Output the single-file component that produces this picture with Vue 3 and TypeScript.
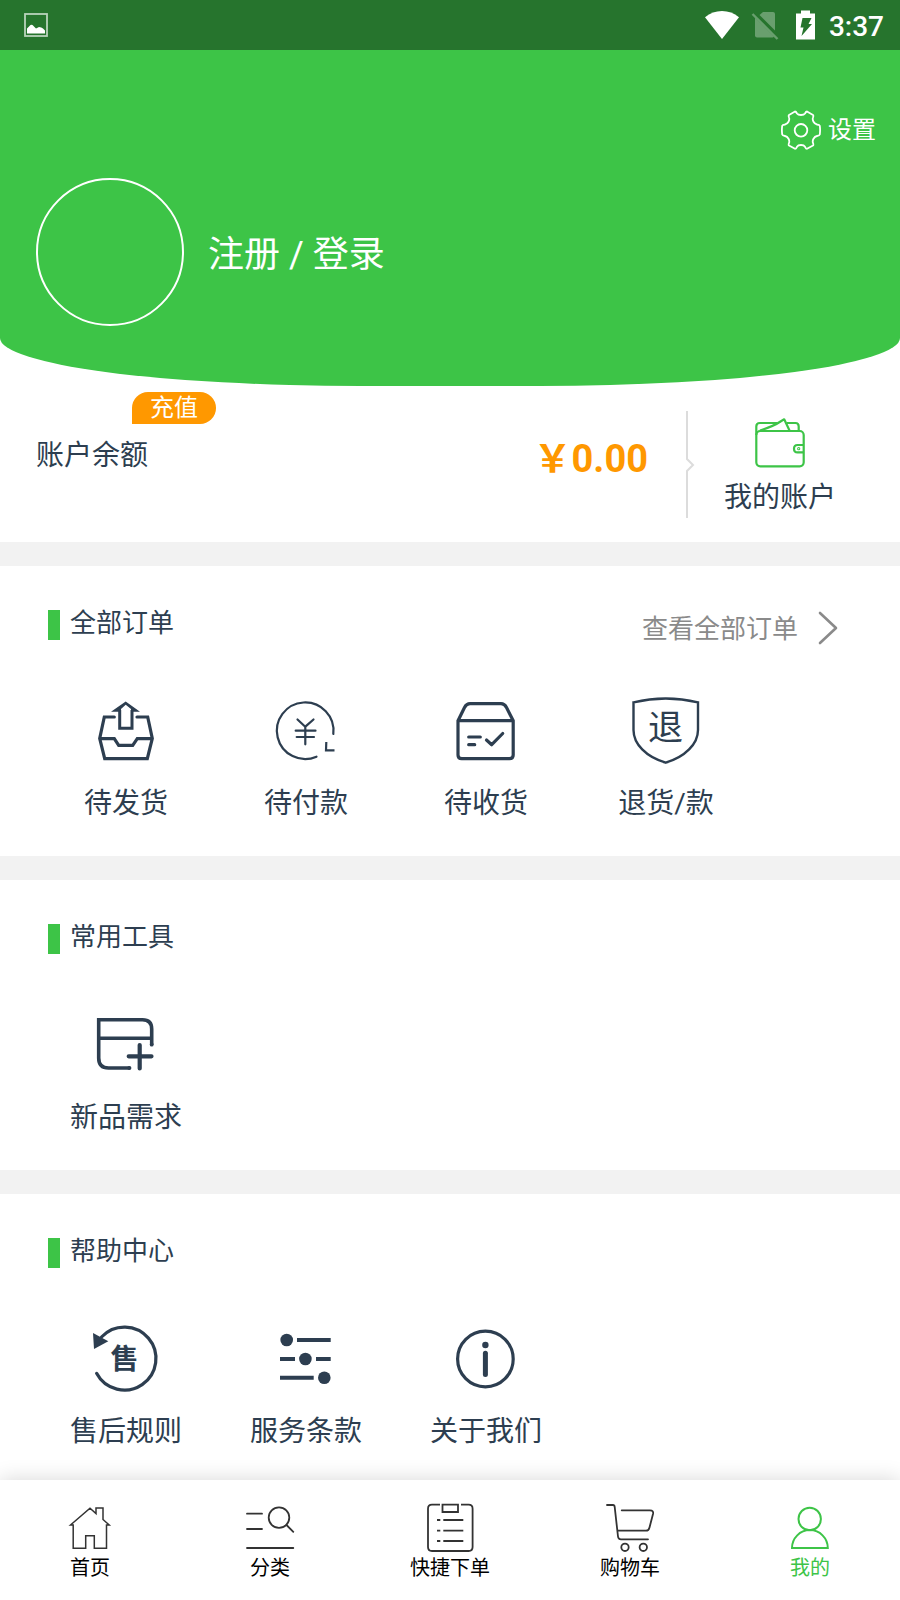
<script setup lang="ts">
interface Item {
  icon: string
  label: string
}

interface Section {
  title: string
  more?: string
  items: Item[]
}

const sections: Section[] = [
  {
    title: '全部订单',
    more: '查看全部订单',
    items: [
      { icon: 'ship', label: '待发货' },
      { icon: 'pay', label: '待付款' },
      { icon: 'receive', label: '待收货' },
      { icon: 'refund', label: '退货/款' },
    ],
  },
  {
    title: '常用工具',
    items: [{ icon: 'request', label: '新品需求' }],
  },
  {
    title: '帮助中心',
    items: [
      { icon: 'rules', label: '售后规则' },
      { icon: 'terms', label: '服务条款' },
      { icon: 'about', label: '关于我们' },
    ],
  },
]

const tabs: Item[] = [
  { icon: 'home', label: '首页' },
  { icon: 'category', label: '分类' },
  { icon: 'quick', label: '快捷下单' },
  { icon: 'cart', label: '购物车' },
  { icon: 'me', label: '我的' },
]

const activeTab = 'me'
</script>

<template>
  <div class="page">
    <div class="status">
      <svg class="status-picture" width="24" height="24" viewBox="0 0 24 24" aria-hidden="true">
        <rect x="1" y="1" width="22" height="22" fill="none" stroke="#b9d3bb" stroke-width="1.8" />
        <path d="M3 20.5V15.5L5.5 13Q7.5 10.5 9.5 13L12 15.5L15 14Q17.5 14 19 15.5L21 17.5V20.5Z" fill="#fff" />
      </svg>
      <svg width="34" height="28" viewBox="0 0 34 28" aria-hidden="true">
        <path d="M0 6.2Q7.5 0 17 0Q26.5 0 34 6.2L17 28Z" fill="#fff" />
      </svg>
      <svg width="28" height="30" viewBox="0 0 28 30" aria-hidden="true">
        <path d="M8.5 5L12 2H22Q24 2 24 4V20.5Z" fill="#699f6e" />
        <path d="M4 7.5L23 26.5Q22.5 27.5 21.5 27.5H6Q4 27.5 4 25.5Z" fill="#699f6e" />
        <path d="M1.5 4L26.5 29" stroke="#699f6e" stroke-width="2.4" />
      </svg>
      <svg width="26" height="30" viewBox="0 0 26 30" aria-hidden="true">
        <path d="M10 0.5H19V3.5H24V29.5H5V3.5H10Z" fill="#fff" />
        <path d="M11.5 8H20.5L17.5 14H21L10.5 26L12.5 17.5H9.5Z" fill="#26742d" />
      </svg>
      <time class="clock">3:37</time>
    </div>

    <header class="hero">
      <a class="settings" href="#settings">
        <svg width="40" height="40" viewBox="0 0 40 40" fill="none" stroke="#fff" stroke-width="1.8" stroke-linejoin="round" aria-hidden="true">
          <path d="M14 1.5Q15 1.5 16 3.5Q17 5 20 5Q23 5 24 3.5Q25 1.5 26 1.5L32 5Q32.7 5.5 32 7.5C31 10 33 14 36 14.5Q38.5 14.8 38.8 15.8Q39.4 20 38.8 24.5Q38.5 25.6 36 26C33 26.5 31 30.5 32 33Q32.7 35 32 35.5L26 38.8Q25 38.8 24 36.8Q23 35 20 35Q17 35 16 36.8Q15 38.8 14 38.8L8 35.5Q7.3 35 8 33C9 30.5 7 26.5 4 26Q1.5 25.6 1.2 24.5Q0.6 20 1.2 15.8Q1.5 14.8 4 14.5C7 14 9 10 8 7.5Q7.3 5.5 8 5Z" />
          <circle cx="20" cy="20.3" r="6.3" />
        </svg>
        <span>设置</span>
      </a>
      <a class="profile" href="#login">
        <span class="avatar"></span>
        <span class="profile-name">注册 / 登录</span>
      </a>
    </header>

    <main>
      <section class="account">
        <div class="balance-label">
          账户余额
          <button class="recharge" type="button">充值</button>
        </div>
        <div class="balance">￥0.00</div>
        <svg class="divider" width="10" height="108" viewBox="0 0 10 108" fill="none" stroke="#dcdcdc" stroke-width="2" aria-hidden="true">
          <path d="M1 1V49L7 55L1 61V108" />
        </svg>
        <a class="wallet" href="#account">
          <svg width="52" height="50" viewBox="0 0 52 50" fill="none" stroke="#3dc447" stroke-width="2.2" stroke-linejoin="round" aria-hidden="true">
            <rect x="2.3" y="13" width="47.4" height="35.3" rx="4" />
            <path d="M2.3 17V8.5Q2.3 5 5.8 5H23M33 5H41.5Q44.7 5 44.7 8.5V13M6 12.5Q20 8 26.5 3.5L30.2 1.3L35.5 12.5" />
            <path d="M49.7 27H43.5Q40 27 40 30.7Q40 34.4 43.5 34.4H49.7" />
            <circle cx="44.7" cy="30.7" r="0.5" />
          </svg>
          <span>我的账户</span>
        </a>
      </section>

      <section v-for="section in sections" :key="section.title" class="group">
        <div class="group-head">
          <h2>{{ section.title }}</h2>
          <a v-if="section.more" class="more" href="#orders">
            <span>{{ section.more }}</span>
            <svg width="20" height="34" viewBox="0 0 20 34" fill="none" stroke="#8a8a8a" stroke-width="2.6" stroke-linecap="round" stroke-linejoin="round" aria-hidden="true">
              <path d="M2 2L18 17L2 32" />
            </svg>
          </a>
        </div>
        <div class="items">
          <a v-for="item in section.items" :key="item.label" class="item" :href="'#' + item.icon">
            <svg class="item-icon" viewBox="0 0 74 74" fill="none" stroke="currentColor" stroke-width="3.2" aria-hidden="true">
              <template v-if="item.icon === 'ship'">
                <path d="M25.3 23H15.3L10.7 44.5L15.7 64.7H58.3L63.3 44.5L58.7 23H48" stroke-linecap="round" />
                <path d="M10.7 44.7H25.3L29.7 51.3H43.7L48.3 44.7H63.3" />
                <path d="M30.7 16V34.3H43V16" stroke-width="3" />
                <path d="M36.7 7.5L51 17.8H42V15L36.7 10.8L32 15V17.8H22Z" fill="currentColor" stroke="none" />
              </template>
              <template v-else-if="item.icon === 'pay'">
                <g stroke-width="2.2" stroke-linecap="round">
                  <path d="M64.3 40A28.3 28.3 0 1 0 47.5 62.7" />
                  <path d="M57.3 48L57 56.3H65.5" stroke-linecap="butt" />
                  <path d="M28.5 25.5L36.3 32.7L44.5 25.5M36.3 32.7V50.3M26.7 36.7H46.5M27.7 43H45" />
                </g>
              </template>
              <template v-else-if="item.icon === 'receive'">
                <path d="M9 26.7L15.5 13.5Q17.5 9.7 21 9.7H52Q55.5 9.7 57.5 13.5L64.2 26.7V61Q64.2 64.7 60.5 64.7H12.7Q9 64.7 9 61ZM9 26.7H64.2" />
                <path d="M19.7 43H31.3M19.7 50.7H25.7M37.5 46L42.7 50.7L53.7 39.5" stroke-linecap="round" stroke-linejoin="round" />
              </template>
              <template v-else-if="item.icon === 'refund'">
                <path d="M4.5 8.3Q36.7 0.8 69 8.3V36C69 50 56 63 36.7 68.7C17 63 4.5 50 4.5 36Z" stroke-width="2.4" />
                <text x="36.5" y="46" font-size="35" text-anchor="middle" fill="currentColor" stroke="none">退</text>
              </template>
              <template v-else-if="item.icon === 'request'">
                <path d="M62.7 37V21Q62.7 11.7 53.5 11.7H9.7V50Q9.7 60 19.5 60H40.5M9.7 30.3H62.7" stroke-width="3.6" />
                <path d="M40.5 60H40.2M62.7 36.5V36.7" stroke-width="3.8" stroke-linecap="round" />
                <path d="M50.7 37V60.5M39.7 48.3H62.5" stroke-width="4.2" stroke-linecap="round" />
              </template>
              <template v-else-if="item.icon === 'rules'">
                <path d="M7.6 51.3A31.5 31.5 0 1 0 12.5 15" stroke-linecap="round" />
                <path d="M4 11L19.3 19.3L5 27Z" fill="currentColor" stroke="none" />
                <text x="35.5" y="47" font-size="28" font-weight="700" text-anchor="middle" fill="currentColor" stroke="none">售</text>
              </template>
              <template v-else-if="item.icon === 'terms'">
                <g fill="currentColor" stroke="none">
                  <circle cx="17.7" cy="18" r="6.3" />
                  <circle cx="36.4" cy="37" r="6.3" />
                  <circle cx="55.3" cy="55.7" r="6.3" />
                </g>
                <path d="M28 18H61.7M11 37H26M47 37H61.7M11 55.7H44.7" stroke-width="4" />
              </template>
              <template v-else>
                <circle cx="36.4" cy="37" r="27.8" />
                <circle cx="36.4" cy="23" r="3.2" fill="currentColor" stroke="none" />
                <path d="M36.4 31.3V52.5" stroke-width="5" stroke-linecap="round" />
              </template>
            </svg>
            <span>{{ item.label }}</span>
          </a>
        </div>
      </section>
    </main>

    <nav class="tabs">
      <a v-for="tab in tabs" :key="tab.icon" class="tab" :class="{ active: tab.icon === activeTab }" :href="'#' + tab.icon">
        <svg class="tab-icon" viewBox="0 0 52 52" fill="none" stroke="currentColor" stroke-width="1.8" aria-hidden="true">
          <path v-if="tab.icon === 'home'" d="M6.5 23L26 6.3L32 11.5V6H39V17.5L45.2 23H42.5V46.3H30.3V33.7H21.7V46.3H9.2V23Z" stroke-width="1.5" />
          <g v-else-if="tab.icon === 'category'" stroke-linecap="round">
            <path d="M3 11.7H18M3 27H18M3 46H49.3M42.5 23L49.3 29.8" />
            <circle cx="35" cy="15.6" r="10.3" />
          </g>
          <g v-else-if="tab.icon === 'quick'">
            <path d="M16 2.7H8Q4 2.7 4 6.7V45Q4 49 8 49H44.6Q48.6 49 48.6 45V6.7Q48.6 2.7 44.6 2.7H37" />
            <path d="M18.5 2.7H34V10H18.5Z" />
            <path d="M13 18H16.3M19.3 18H39.3M13 28.7H16.3M19.3 28.7H39.3M13 39H16.3M19.3 39H39.3" />
          </g>
          <g v-else-if="tab.icon === 'cart'" stroke-linecap="round">
            <path d="M3 3H9Q10.5 3 10.7 5L14 34.5Q14.3 37.3 17 37.3H44" />
            <path d="M17.7 8.3H46Q49.8 8.3 49 12L45.5 25.5Q44.7 28.7 42 28.7H14" />
            <circle cx="21" cy="45.3" r="3.7" />
            <circle cx="39.3" cy="45.3" r="3.7" />
          </g>
          <g v-else stroke-width="2">
            <circle cx="25.7" cy="17" r="11.2" />
            <path d="M8 46A17.9 17.9 0 0 1 43.8 46Z" />
          </g>
        </svg>
        <span>{{ tab.label }}</span>
      </a>
    </nav>
  </div>
</template>

<style>
body {
  margin: 0;
  background: #fff;
}
</style>

<style scoped>
.page {
  display: flex;
  flex-direction: column;
  min-height: 100vh;
  background: #fff;
  color: #2d3e50;
  font-family: Roboto, "Noto Sans CJK SC", sans-serif;
}

a {
  color: inherit;
  text-decoration: none;
}

svg {
  display: block;
  flex: none;
}

.status {
  display: flex;
  align-items: center;
  gap: 12px;
  height: 50px;
  padding: 0 16px 0 24px;
  background: #26742d;
  color: #fff;
}

.status-picture {
  margin-right: auto;
}

.clock {
  padding-top: 4px;
  font-size: 28px;
  font-weight: 500;
  line-height: 40px;
}

.hero {
  display: flex;
  flex-direction: column;
  gap: 24px;
  padding: 56px 24px 60px 36px;
  background: #3dc447;
  border-radius: 0 0 40% 40% / 0 0 48px 48px;
  color: #fff;
}

.settings {
  display: flex;
  align-items: center;
  align-self: flex-end;
  gap: 7px;
  height: 48px;
  font-size: 24px;
  line-height: 40px;
}

.profile {
  display: flex;
  align-items: center;
  align-self: flex-start;
  gap: 24px;
  font-size: 36px;
}

.profile-name {
  padding-bottom: 2px;
}

.avatar {
  box-sizing: border-box;
  width: 148px;
  height: 148px;
  border: 2px solid #fff;
  border-radius: 50%;
}

.account {
  display: flex;
  align-items: flex-start;
  padding: 0 36px 24px;
}

.balance-label {
  position: relative;
  margin-top: 50px;
  font-size: 28px;
  line-height: 40px;
}

.recharge {
  position: absolute;
  left: 96px;
  bottom: 52px;
  width: 84px;
  height: 32px;
  padding: 0;
  border: 0;
  border-radius: 16px 16px 16px 0;
  background: #ff9800;
  color: #fff;
  font: inherit;
  font-size: 24px;
  line-height: 32px;
}

.balance {
  margin: 48px 38px 0 auto;
  color: #ff9800;
  font-size: 38px;
  font-weight: 700;
  line-height: 50px;
}

.divider {
  margin-top: 24px;
}

.wallet {
  display: flex;
  flex-direction: column;
  align-items: center;
  gap: 10px;
  width: 168px;
  margin-top: 32px;
  font-size: 28px;
  line-height: 40px;
}

.group {
  padding-bottom: 32px;
  border-top: 24px solid #f2f2f2;
}

.group:last-child {
  padding-bottom: 28px;
}

.group-head {
  display: flex;
  justify-content: space-between;
  height: 36px;
  padding: 44px 62px 48px 48px;
}

h2 {
  height: 30px;
  margin: 0;
  padding-left: 10px;
  border-left: 12px solid #3dc447;
  font-size: 26px;
  font-weight: 400;
  line-height: 26px;
}

.more {
  display: flex;
  align-items: center;
  gap: 20px;
  color: #8a8a8a;
  font-size: 26px;
  line-height: 36px;
}

.more span {
  padding-top: 2px;
}

.items {
  display: grid;
  grid-template-columns: repeat(4, 20vw);
  padding-left: 36px;
}

.item {
  display: flex;
  flex-direction: column;
  align-items: center;
  gap: 16px;
  font-size: 28px;
  line-height: 40px;
}

.item-icon {
  width: 74px;
  height: 74px;
}

.tabs {
  position: sticky;
  bottom: 0;
  display: grid;
  grid-template-columns: repeat(5, 1fr);
  box-sizing: border-box;
  height: 120px;
  margin-top: auto;
  padding-top: 22px;
  background: #fff;
  box-shadow: 0 0 20px rgba(0, 0, 0, 0.16);
}

.tab {
  display: flex;
  flex-direction: column;
  align-items: center;
  color: #333;
  font-size: 20px;
  line-height: 28px;
}

.tab span {
  color: #000;
}

.tab-icon {
  width: 52px;
  height: 52px;
}

.tab.active,
.tab.active span {
  color: #3dc447;
}
</style>
